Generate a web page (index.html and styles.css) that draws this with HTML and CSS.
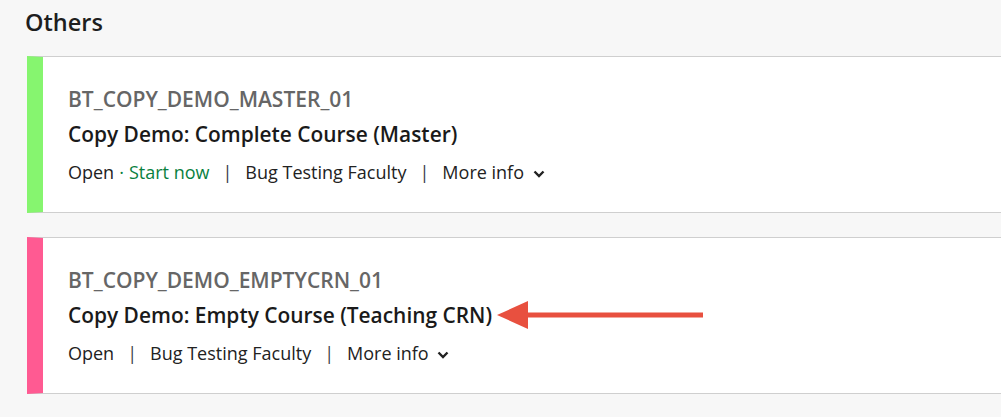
FILE: index.html
```html
<!DOCTYPE html>
<html>
<head>
<meta charset="utf-8">
<link rel="stylesheet" href="styles.css">
</head>
<body>
<h2 class="section-title">Others</h2>
<div class="card-list">
  <div class="card card-green">
    <div class="card-code">BT_COPY_DEMO_MASTER_01</div>
    <div class="card-title">Copy Demo: Complete Course (Master)</div>
    <div class="card-meta">
      <span>Open</span><span class="dot">·</span><span class="start">Start now</span>
      <span class="sep">|</span>
      <span>Bug Testing Faculty</span>
      <span class="sep">|</span>
      <span class="more">More info <svg class="chev" width="12" height="8" viewBox="0 0 12 8"><path d="M1.5 1.5 L6 6 L10.5 1.5" fill="none" stroke="#222" stroke-width="2.4"/></svg></span>
    </div>
  </div>
  <div class="card card-pink">
    <div class="card-code">BT_COPY_DEMO_EMPTYCRN_01</div>
    <div class="card-title">Copy Demo: Empty Course (Teaching CRN)</div>
    <div class="card-meta">
      <span>Open</span>
      <span class="sep">|</span>
      <span>Bug Testing Faculty</span>
      <span class="sep">|</span>
      <span class="more">More info <svg class="chev" width="12" height="8" viewBox="0 0 12 8"><path d="M1.5 1.5 L6 6 L10.5 1.5" fill="none" stroke="#222" stroke-width="2.4"/></svg></span>
    </div>
  </div>
</div>
<svg class="arrow" width="220" height="34" viewBox="0 0 220 34">
  <polygon points="0,17 31,3 31,31" fill="#e8503f"/>
  <rect x="28" y="14.5" width="178" height="5" fill="#e8503f"/>
</svg>
</body>
</html>
```
FILE: styles.css
```css
html, body {
  margin: 0;
  padding: 0;
  background: #f7f7f7;
  overflow: hidden;
  font-family: "Open Sans", "Liberation Sans", sans-serif;
  color: #222;
}
body {
  position: relative;
  width: 1001px;
  height: 417px;
}
.section-title {
  margin: 7px 0 19px 25px;
  font-size: 23.5px;
  line-height: 30px;
  font-weight: 600;
  color: #1e1e1e;
}
.card-list {
  display: flex;
  flex-direction: column;
  gap: 24px;
  margin-left: 27px;
  margin-right: -20px;
}
.card {
  background: #fff;
  border: 1px solid #cfcfcf;
  border-left: 16px solid #86f56f;
  padding: 27px 0 22px 25px;
}
.card-pink {
  border-left-color: #ff5a92;
}
.card-code {
  font-size: 21px;
  line-height: 30px;
  font-weight: 600;
  color: #666;
}
.card-title {
  font-size: 20.9px;
  line-height: 40px;
  font-weight: 600;
  color: #1a1a1a;
}
.card-meta {
  font-size: 18px;
  line-height: 36px;
  color: #222;
  display: flex;
  align-items: center;
}
.card-meta .dot {
  margin: 0 5px;
  color: #0a7f3f;
}
.card-meta .start {
  color: #0a7f3f;
}
.card-meta .sep {
  margin: 0 13px;
  color: #3a3a4a;
}
.chev {
  margin-left: 4px;
  vertical-align: middle;
}
.arrow {
  position: absolute;
  left: 497px;
  top: 298px;
}
```
